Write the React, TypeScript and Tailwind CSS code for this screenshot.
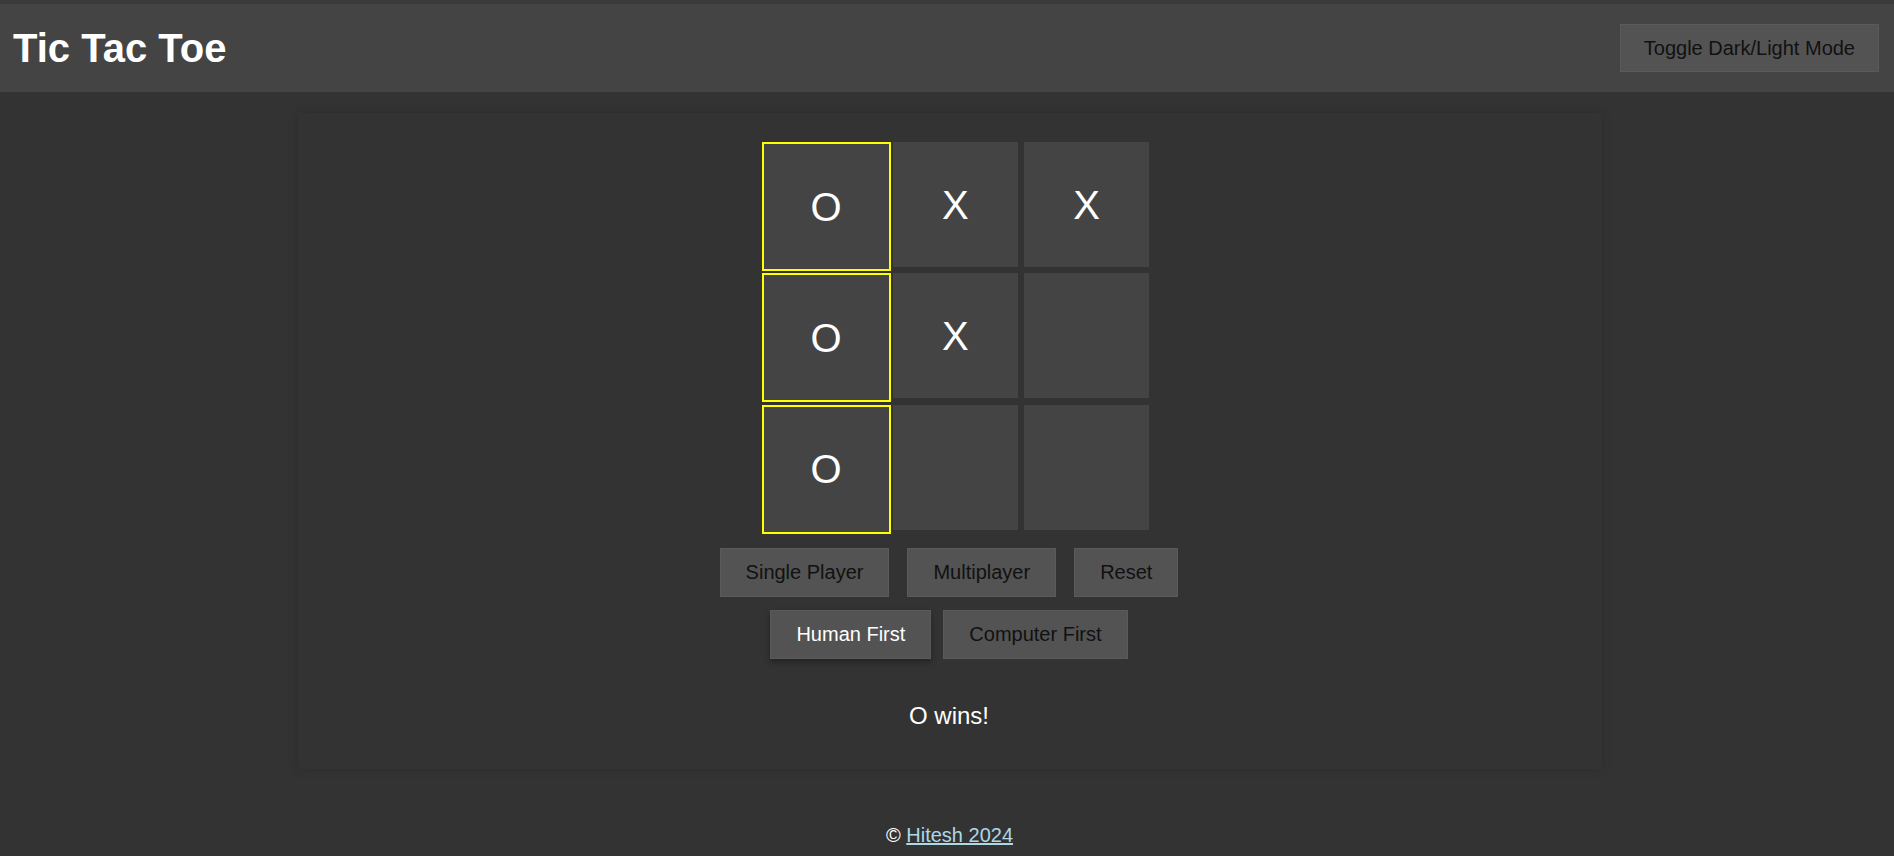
import React from "react";

type Cell = "X" | "O" | null;

const board: Cell[] = ["O", "X", "X", "O", "X", null, "O", null, null];
const winLine = [0, 3, 6];

const btn =
  "bg-[#535353] border border-[#5a5a5a] px-[25px] py-[12px] text-[20px] leading-[23px] text-[#111]";

const Square: React.FC<{ value: Cell; win: boolean }> = ({ value, win }) => (
  <div
    className={
      win
        ? "w-[129px] h-[129px] border-2 border-[#ffff00] bg-[#444] flex items-center justify-center text-white text-[40px]"
        : "w-[125px] h-[125px] bg-[#444] flex items-center justify-center text-white text-[40px]"
    }
  >
    {value}
  </div>
);

export default function App() {
  return (
    <div
      className="min-h-screen bg-[#333] text-white"
      style={{ fontFamily: '"Liberation Sans", Arial, sans-serif' }}
    >
      <div className="h-[4px] bg-[#3b3b3b]" />
      <header className="h-[88px] bg-[#444] flex items-center justify-between pl-[13px] pr-[15px]">
        <h1 className="text-[40px] font-bold leading-none">Tic Tac Toe</h1>
        <button className="bg-[#535353] border border-[#5a5a5a] px-[23px] py-[11.5px] text-[20px] leading-[23px] text-[#111]">
          Toggle Dark/Light Mode
        </button>
      </header>

      <main className="w-[1304px] mx-auto translate-x-[3px] mt-[21px] pt-[29px] pb-[39px] pr-[2px] shadow-[0_0_10px_rgba(0,0,0,0.15)] flex flex-col items-center">
        <div className="grid grid-cols-[repeat(3,125px)] grid-rows-[repeat(3,125px)] gap-[6.25px] ml-[12.5px]">
          {board.map((v, i) => (
            <Square key={i} value={v} win={winLine.includes(i)} />
          ))}
        </div>

        <div className="flex gap-[18px] mt-[18px]">
          <button className={btn}>Single Player</button>
          <button className={btn}>Multiplayer</button>
          <button className={btn}>Reset</button>
        </div>
        <div className="flex gap-[12px] mt-[13px]">
          <button className={btn + " !text-white shadow-[0_3px_6px_rgba(0,0,0,0.35)]"}>
            Human First
          </button>
          <button className={btn}>Computer First</button>
        </div>

        <p className="mt-[43px] text-[24px] leading-[28px]">O wins!</p>
      </main>

      <footer className="mt-[55px] text-center text-[20px] leading-[23px] pl-[5px]">
        ©{" "}
        <a href="#" className="text-[#add8e6] underline">
          Hitesh 2024
        </a>
      </footer>
    </div>
  );
}
